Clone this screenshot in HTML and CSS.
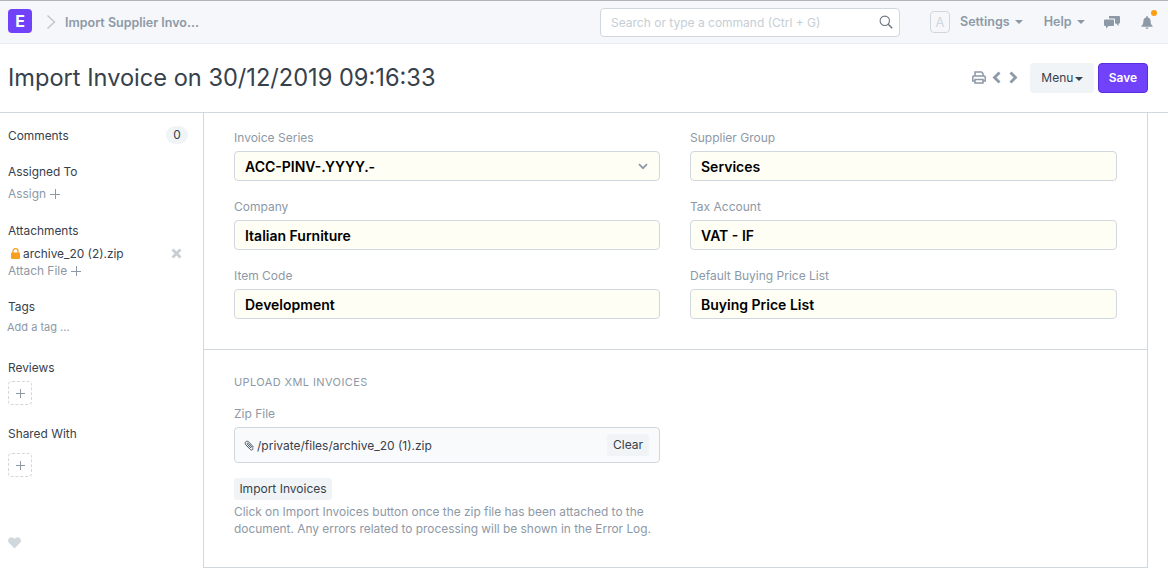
FILE: index.html
```html
<!DOCTYPE html>
<html lang="en">
<head>
    <meta charset="UTF-8">
    <meta name="viewport" content="width=device-width, initial-scale=1.0">
    <title>Import Supplier Invoice</title>
    <link rel="stylesheet" href="styles.css">
</head>
<body>

<nav class="navbar">
    <div class="logo">E</div>
    <svg class="crumb-arrow" width="10" height="16" viewBox="0 0 10 16"><path d="M1.500 1.500 8.500 8 1.500 14.500" fill="none" stroke="#c0c6cc" stroke-width="1.400"/></svg>
    <span class="crumb">Import Supplier Invo...</span>
    <div class="search">
        <span class="search-text">Search or type a command (Ctrl + G)</span>
        <svg width="14" height="14" viewBox="0 0 14 14"><circle cx="5.800" cy="5.800" r="4.700" fill="none" stroke="#6c7680" stroke-width="1.100"/><path d="M9.200 9.200 13.200 13.200" stroke="#6c7680" stroke-width="1.500"/></svg>
    </div>
    <div class="avatar">A</div>
    <span class="nav-link nav-settings">Settings <i class="caret"></i></span>
    <span class="nav-link nav-help">Help <i class="caret"></i></span>
    <svg class="nav-chat" width="16" height="14" viewBox="0 0 16 14"><path d="M5 1h10a1 1 0 0 1 1 1v5.500a1 1 0 0 1-1 1h-.5V11L12 8.500H11V4.500a1 1 0 0 0-1-1H5z" fill="#8d99a6"/><path d="M1 4.500h8a1 1 0 0 1 1 1v4.500a1 1 0 0 1-1 1H4.500L2 13.500V11H1a1 1 0 0 1-1-1V5.500a1 1 0 0 1 1-1z" fill="#8d99a6"/></svg>
    <div class="bell">
        <svg width="12" height="13" viewBox="0 0 13 15"><path d="M6.500 0a1 1 0 0 1 1 1v.6C9.600 2 10.700 3.700 10.700 6c0 3.200 1 4.300 2.300 5.500v.9H0v-.9C1.300 10.300 2.300 9.200 2.300 6c0-2.300 1.100-4 3.200-4.400V1a1 1 0 0 1 1-1zM4.800 13.200h3.400a1.700 1.700 0 0 1-3.400 0z" fill="#8d99a6"/></svg>
        <span class="bell-dot"></span>
    </div>
</nav>

<header class="page-head">
    <h1>Import Invoice on 30/12/2019 09:16:33</h1>
    <div class="page-actions">
        <svg width="14" height="13" viewBox="0 0 14 13"><path d="M3 5V1h6.500L11 2.500V5M3 10H.8V6a1 1 0 0 1 1-1h10.400a1 1 0 0 1 1 1v4H11M3 8.500h8V12H3z" fill="none" stroke="#8d99a6" stroke-width="1.500"/></svg>
        <svg class="chev-left" width="9" height="13" viewBox="0 0 9 13"><path d="M7.500 1.500 2.500 6.500l5 5" fill="none" stroke="#8d99a6" stroke-width="2.800"/></svg>
        <svg class="chev-right" width="9" height="13" viewBox="0 0 9 13"><path d="M1.500 1.500l5 5-5 5" fill="none" stroke="#8d99a6" stroke-width="2.800"/></svg>
        <button class="btn-menu">Menu <i class="caret caret-dark"></i></button>
        <button class="btn-save">Save</button>
    </div>
</header>

<div class="layout">
    <aside class="sidebar">
        <div class="side-comments">
            <span>Comments</span>
            <span class="count">0</span>
        </div>
        <div class="side-title side-assigned">Assigned To</div>
        <div class="side-link side-assign">Assign <span class="plus"></span></div>
        <div class="side-title side-attach">Attachments</div>
        <div class="attachment">
            <svg width="9" height="11" viewBox="0 0 9 11"><path d="M2 5V3.200a2.500 2.500 0 0 1 5 0V5" fill="none" stroke="#f8a01c" stroke-width="1.300"/><rect y="4.500" width="9" height="6.500" rx="1" fill="#f8a01c"/></svg>
            <span class="attachment-name">archive_20 (2).zip</span>
            <svg class="attachment-x" width="11" height="11" viewBox="0 0 11 11"><path d="M1.500 1.500l8 8M9.500 1.500l-8 8" stroke="#c8ced3" stroke-width="2.800"/></svg>
        </div>
        <div class="side-link side-attach-file">Attach File <span class="plus"></span></div>
        <div class="side-title side-tags">Tags</div>
        <div class="add-tag">Add a tag ...</div>
        <div class="side-title side-reviews">Reviews</div>
        <div class="dashed-add"><span class="plus"></span></div>
        <div class="side-title side-shared">Shared With</div>
        <div class="dashed-add"><span class="plus"></span></div>
        <svg class="heart" width="13" height="12" viewBox="0 0 13 12"><path d="M6.500 11.500.9 5.800C-1 3.500.6.300 3.400.300c1.300 0 2.400.7 3.100 1.800C7.200 1 8.300.3 9.600.300c2.800 0 4.400 3.200 2.500 5.500z" fill="#d1d8dd"/></svg>
    </aside>

    <main class="form">
        <section class="form-section fields">
            <div class="field">
                <label>Invoice Series</label>
                <div class="input">ACC-PINV-.YYYY.-
                    <svg class="select-arrow" width="10" height="7" viewBox="0 0 10 7"><path d="M1 1.200l4 4 4-4" fill="none" stroke="#8d99a6" stroke-width="1.800"/></svg>
                </div>
            </div>
            <div class="field">
                <label>Supplier Group</label>
                <div class="input">Services</div>
            </div>
            <div class="field">
                <label>Company</label>
                <div class="input">Italian Furniture</div>
            </div>
            <div class="field">
                <label>Tax Account</label>
                <div class="input">VAT - IF</div>
            </div>
            <div class="field">
                <label>Item Code</label>
                <div class="input">Development</div>
            </div>
            <div class="field">
                <label>Default Buying Price List</label>
                <div class="input">Buying Price List</div>
            </div>
        </section>

        <section class="form-section upload">
            <div class="section-title">Upload XML Invoices</div>
            <label>Zip File</label>
            <div class="file-box">
                <svg width="11" height="11" viewBox="0 0 11 11"><path d="M9.600 7.200 5 2.200C4 1.100 2.600 1 1.700 1.800.9 2.600 1 3.900 2 5l4.300 4.500c.7.700 1.600.8 2.200.3.600-.6.500-1.400-.2-2.200L4.400 3.500c-.4-.4-.8-.4-1.100-.2-.3.300-.2.700.2 1.100l3.400 3.600" fill="none" stroke="#4c5a67" stroke-width="1"/></svg>
                <span class="file-name">/private/files/archive_20 (1).zip</span>
                <button class="btn-small btn-clear">Clear</button>
            </div>
            <button class="btn-small btn-import">Import Invoices</button>
            <p class="help">Click on Import Invoices button once the zip file has been attached to the document. Any errors related to processing will be shown in the Error Log.</p>
        </section>
    </main>
</div>

</body>
</html>
```

FILE: styles.css
```css
* {
    box-sizing: border-box;
    margin: 0;
    padding: 0;
    font-family: Inter, "Noto Sans", sans-serif;
}
body {
    width: 1168px;
    height: 571px;
    overflow: hidden;
    background: #fff;
    color: #36414c;
    font-size: 13px;
}
button {
    border: none;
    cursor: pointer;
    font-size: 12px;
}

/* navbar */
.navbar {
    display: flex;
    align-items: center;
    height: 44px;
    padding-left: 8px;
    background: #f5f7fa;
    border-top: 1px solid #b4b4b4;
    border-bottom: 1px solid #e9edf1;
}
.logo {
    width: 24px;
    height: 24px;
    margin-bottom: 2px;
    background: #7042fa;
    border-radius: 4px;
    color: #fff;
    font-size: 16px;
    font-weight: 700;
    line-height: 24px;
    text-align: center;
}
.crumb-arrow {
    margin-left: 14px;
}
.crumb {
    margin-left: 9px;
    width: 190px;
    color: #8d99a6;
    font-size: 12.500px;
    font-weight: 600;
}
.search {
    display: flex;
    align-items: center;
    justify-content: space-between;
    width: 300px;
    height: 29px;
    margin-left: 345px;
    padding: 0 6px 0 10px;
    background: #fff;
    border: 1px solid #d1d8dd;
    border-radius: 4px;
}
.search-text {
    color: #c6ced5;
    font-size: 12px;
}
.avatar {
    width: 20px;
    height: 22px;
    margin-left: 30px;
    border: 1px solid #d1d8dd;
    border-radius: 4px;
    color: #d1d8dd;
    font-size: 13px;
    line-height: 20px;
    text-align: center;
}
.nav-link {
    margin-bottom: 2px;
    color: #8d99a6;
    font-size: 12.500px;
    font-weight: 600;
}
.nav-settings {
    margin-left: 10px;
}
.nav-help {
    margin-left: 21px;
}
.nav-chat {
    margin-left: 19px;
}
.caret {
    display: inline-block;
    margin-left: 2px;
    vertical-align: middle;
    border-top: 4px solid #8d99a6;
    border-left: 4px solid transparent;
    border-right: 4px solid transparent;
}
.caret-dark {
    border-top-color: #36414c;
}
.bell {
    position: relative;
    display: flex;
    margin-left: 21px;
}
.bell-dot {
    position: absolute;
    top: -6px;
    right: -4px;
    width: 6px;
    height: 6px;
    background: #fb9e12;
    border-radius: 50%;
}

/* page head */
.page-head {
    display: flex;
    align-items: center;
    justify-content: space-between;
    height: 69px;
    padding: 0 20px 2px 8px;
    border-bottom: 1px solid #d1d8dd;
}
.page-head h1 {
    color: #36414c;
    font-size: 23.600px;
    font-weight: 400;
}
.page-actions {
    display: flex;
    align-items: center;
    margin-top: 1px;
}
.chev-left {
    margin-left: 6px;
}
.chev-right {
    margin-left: 8px;
}
.btn-menu {
    width: 64px;
    height: 30px;
    margin-left: 12px;
    background: #f0f4f7;
    border-radius: 4px;
    color: #36414c;
}
.btn-menu .caret {
    margin-left: -2px;
}
.btn-save {
    width: 50px;
    height: 30px;
    margin-left: 4px;
    background: #7042fa;
    border: 1px solid #5a2ee0;
    border-radius: 4px;
    color: #fff;
    font-weight: 600;
}

/* sidebar */
.layout {
    display: flex;
    height: 455px;
}
.sidebar {
    position: relative;
    width: 203px;
    padding: 13px 15px 0 8px;
    font-size: 11.900px;
}
.side-comments {
    display: flex;
    align-items: center;
    justify-content: space-between;
    height: 18px;
}
.count {
    width: 22px;
    height: 18px;
    background: #f0f4f7;
    border-radius: 9px;
    line-height: 18px;
    text-align: center;
}
.side-title {
    height: 15px;
    line-height: 15px;
}
.side-assigned {
    margin-top: 20px;
}
.side-link {
    color: #8d99a6;
    height: 15px;
    line-height: 15px;
}
.side-assign {
    margin-top: 7px;
}
.side-attach {
    margin-top: 22px;
}
.attachment {
    display: flex;
    align-items: center;
    margin-top: 8px;
    height: 15px;
    padding-left: 3px;
}
.attachment-name {
    margin-left: 3px;
    flex: 1;
}
.attachment-x {
    margin-right: 6px;
}
.side-attach-file {
    margin-top: 2px;
}
.side-tags {
    margin-top: 21px;
}
.add-tag {
    margin-top: 6px;
    margin-left: -1px;
    color: #8d99a6;
    font-size: 11px;
}
.side-reviews {
    margin-top: 26px;
}
.side-shared {
    margin-top: 21px;
}
.dashed-add {
    display: flex;
    align-items: center;
    justify-content: center;
    width: 24px;
    height: 24px;
    margin-top: 6px;
    border: 1px dashed #d1d8dd;
    border-radius: 4px;
}
.side-shared + .dashed-add {
    margin-top: 12px;
}
.plus {
    display: inline-block;
    width: 9px;
    height: 9px;
    vertical-align: -1px;
    background:
        linear-gradient(#8d99a6, #8d99a6) center / 9px 1px no-repeat,
        linear-gradient(#8d99a6, #8d99a6) center / 1px 9px no-repeat;
}
.side-link .plus {
    width: 10px;
    height: 10px;
    margin-left: 1px;
    background-size: 10px 1px, 1px 10px;
}
.heart {
    position: absolute;
    left: 8px;
    top: 424px;
}

/* form */
.form {
    width: 945px;
    height: 455px;
    border-left: 1px solid #d1d8dd;
    border-right: 1px solid #d1d8dd;
    border-bottom: 1px solid #d1d8dd;
}
.form-section {
    padding: 0 30px;
}
.fields {
    display: grid;
    grid-template-columns: 426px 427px;
    align-content: start;
    column-gap: 30px;
    row-gap: 18px;
    height: 237px;
    padding-top: 17px;
    border-bottom: 1px solid #d1d8dd;
}
label {
    display: block;
    height: 15px;
    color: #8d99a6;
    font-size: 12px;
    line-height: 15px;
}
.input {
    position: relative;
    display: flex;
    align-items: center;
    height: 30px;
    margin-top: 6px;
    padding-left: 10px;
    background: #fffef5;
    border: 1px solid #d1d8dd;
    border-radius: 4px;
    color: #000;
    font-size: 14px;
    font-weight: 600;
}
.select-arrow {
    position: absolute;
    right: 11px;
    top: 11px;
}
.upload {
    padding-top: 25px;
}
.section-title {
    height: 15px;
    margin-bottom: 16px;
    color: #8d99a6;
    font-size: 11px;
    letter-spacing: 0.400px;
    line-height: 15px;
    text-transform: uppercase;
}
.file-box {
    display: flex;
    align-items: center;
    width: 426px;
    height: 36px;
    margin-top: 6px;
    padding: 0 10px 0 9px;
    background: #f9fafb;
    border: 1px solid #d1d8dd;
    border-radius: 4px;
}
.file-name {
    flex: 1;
    margin-left: 2px;
    font-size: 12px;
}
.btn-small {
    height: 22px;
    background: #f0f4f7;
    border-radius: 3px;
    color: #36414c;
}
.btn-clear {
    width: 42px;
    padding-bottom: 2px;
}
.btn-import {
    display: block;
    width: 98px;
    margin-top: 15px;
    padding-bottom: 2px;
}
.help {
    width: 426px;
    margin-top: 3px;
    color: #8d99a6;
    font-size: 11.900px;
    line-height: 17px;
}
```
